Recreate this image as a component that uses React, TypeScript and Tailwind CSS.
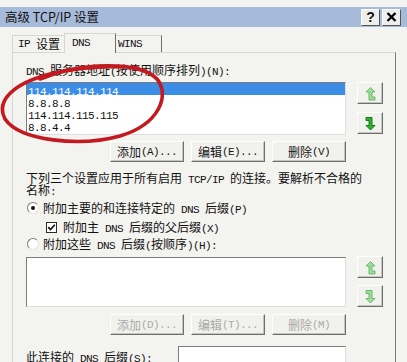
import React from "react";

function T({ s }: { s: string }) {
  const parts = s.split(/([\x20-\x7E]+)/).filter((p) => p.length > 0);
  return (
    <>
      {parts.map((p, i) =>
        /^[\x20-\x7E]+$/.test(p) ? (
          <span
            key={i}
            className="font-['Liberation_Mono',monospace] text-[11px] tracking-[-0.6px] whitespace-pre"
          >
            {p}
          </span>
        ) : (
          <span key={i} className="font-['Noto_Sans_CJK_SC',sans-serif] text-[12px]">
            {p}
          </span>
        )
      )}
    </>
  );
}

function Btn({ label, disabled }: { label: string; disabled?: boolean }) {
  return (
    <div
      className={`w-[74px] h-[21px] flex items-center justify-center leading-[12px] bg-[#f1f1ed] border border-t-white border-l-white border-r-[#6e6e6e] border-b-[#6e6e6e] shadow-[inset_-1px_-1px_0_#c4c4c0] whitespace-nowrap ${
        disabled ? "text-[#a9a9a9]" : "text-[#161616]"
      }`}
    >
      <T s={label} />
    </div>
  );
}

function Arrow({ dir, enabled }: { dir: "up" | "down"; enabled: boolean }) {
  const fill = enabled ? "#2db32d" : "#9edc9e";
  const stroke = enabled ? "#0b6e0b" : "#62b462";
  const pts =
    dir === "up"
      ? "4.5,0.5 9,5 6,5 6,10 9,10 9,13 3,13 3,5 0,5"
      : "4.5,13 0,8.5 3,8.5 3,3.5 0,3.5 0,0.5 6,0.5 6,8.5 9,8.5";
  return (
    <div className="w-[26px] h-[22px] flex items-center justify-center bg-[#f1f1ed] border border-t-white border-l-white border-r-[#6e6e6e] border-b-[#6e6e6e] shadow-[inset_-1px_-1px_0_#c4c4c0]">
      <svg width="11" height="15" viewBox="-1 -1 11 15">
        <polygon points={pts} fill={fill} stroke={stroke} strokeWidth="0.9" strokeLinejoin="round" />
      </svg>
    </div>
  );
}

function ListBox({ h, children }: { h: string; children?: React.ReactNode }) {
  return (
    <div
      className={`w-[320px] ${h} bg-white border border-t-[#7c7c7c] border-l-[#7c7c7c] border-r-[#dedede] border-b-[#dedede] overflow-hidden`}
    >
      {children}
    </div>
  );
}

export default function App() {
  const ips = ["114.114.114.114", "8.8.8.8", "114.114.115.115", "8.8.4.4"];
  return (
    <div className="relative w-[407px] h-[362px] overflow-hidden bg-[#f3f3ef] text-[#111]">
      {/* title bar */}
      <div className="mt-[7px] h-[20px] bg-[#a6bad9] flex items-center justify-between pl-[5px] pr-[6px]">
        <div className="font-['Noto_Sans_CJK_SC',sans-serif] text-[12.5px] leading-[14px] text-[#111] whitespace-nowrap">
          高级 TCP/IP 设置
        </div>
        <div className="flex gap-[2px]">
          <div className="w-[19px] h-[17px] flex items-center justify-center bg-[#eeeeec] border border-t-white border-l-white border-r-[#555] border-b-[#555] font-['Liberation_Sans',sans-serif] font-bold text-[14px] leading-[14px]">
            ?
          </div>
          <div className="w-[19px] h-[17px] flex items-center justify-center bg-[#eeeeec] border border-t-white border-l-white border-r-[#555] border-b-[#555]">
            <svg width="11" height="10" viewBox="0 0 11 10">
              <path d="M1.5 1 L9.5 9 M9.5 1 L1.5 9" stroke="#000" strokeWidth="2.3" />
            </svg>
          </div>
        </div>
      </div>

      {/* tabs */}
      <div className="relative z-10 mt-[6px] ml-[12px] h-[20px] flex items-end">
        <div className="w-[52px] h-[17px] mb-[1px] flex items-center pl-[5px] leading-[12px] border-t border-l border-t-[#d6d6d2] border-l-[#d6d6d2] whitespace-nowrap">
          <T s="IP 设置" />
        </div>
        <div className="w-[52px] h-[20px] flex items-center pl-[7px] pb-[2px] leading-[12px] bg-[#f3f3ef] border-t border-l border-r border-t-[#d6d6d2] border-l-[#d6d6d2] border-r-[#6e6e6e] whitespace-nowrap">
          <T s="DNS" />
        </div>
        <div className="w-[46px] h-[17px] mb-[1px] flex items-center pl-[2px] leading-[12px] border-t border-r border-t-[#d6d6d2] border-r-[#6e6e6e] whitespace-nowrap">
          <T s="WINS" />
        </div>
      </div>

      {/* panel */}
      <div className="relative z-0 -mt-[1px] ml-[12px] w-[384px] h-[330px] border-t border-l border-r border-t-[#d6d6d2] border-l-[#d6d6d2] border-r-[#7a7a7a] pl-[13px] pt-[10px]">
        <div className="h-[12px] leading-[12px] whitespace-nowrap">
          <T s="DNS 服务器地址(按使用顺序排列)(N):" />
        </div>

        <div className="mt-[7px] flex">
          <ListBox h="h-[53px]">
            {ips.map((ip, i) => (
              <div
                key={ip}
                className={`h-[12px] leading-[12px] pl-[1px] whitespace-nowrap ${
                  i === 0 ? "bg-[#3b8de6] text-white" : "text-[#111]"
                }`}
              >
                <T s={ip} />
              </div>
            ))}
          </ListBox>
          <div className="ml-[11px] flex flex-col gap-[8px]">
            <Arrow dir="up" enabled={false} />
            <Arrow dir="down" enabled={true} />
          </div>
        </div>

        <div className="mt-[6px] w-[320px] flex justify-end gap-[7px]">
          <Btn label="添加(A)..." />
          <Btn label="编辑(E)..." />
          <Btn label="删除(V)" />
        </div>

        <div className="mt-[9px] leading-[12px] whitespace-nowrap">
          <div className="h-[12px]">
            <T s="下列三个设置应用于所有启用 TCP/IP 的连接。要解析不合格的" />
          </div>
          <div className="h-[12px]">
            <T s="名称:" />
          </div>
        </div>

        <div className="mt-[5px] h-[16px] flex items-center whitespace-nowrap leading-[12px]">
          <div className="ml-[1px] w-[12px] h-[12px] rounded-full bg-white border border-t-[#7a7a7a] border-l-[#7a7a7a] border-r-[#e4e4e4] border-b-[#e4e4e4] flex items-center justify-center">
            <div className="w-[4px] h-[4px] rounded-full bg-[#111]" />
          </div>
          <div className="ml-[4px]">
            <T s="附加主要的和连接特定的 DNS 后缀(P)" />
          </div>
        </div>

        <div className="mt-[3px] h-[16px] flex items-center whitespace-nowrap leading-[12px] pl-[20px]">
          <div className="w-[11px] h-[11px] bg-white border border-[#2a2a2a] flex items-center justify-center">
            <svg width="9" height="9" viewBox="0 0 9 9">
              <path d="M1.2 4.2 L3.5 6.6 L7.8 1.8" fill="none" stroke="#111" strokeWidth="1.7" />
            </svg>
          </div>
          <div className="ml-[6px]">
            <T s="附加主 DNS 后缀的父后缀(X)" />
          </div>
        </div>

        <div className="mt-[1px] h-[16px] flex items-center whitespace-nowrap leading-[12px]">
          <div className="ml-[1px] w-[12px] h-[12px] rounded-full bg-white border border-t-[#7a7a7a] border-l-[#7a7a7a] border-r-[#e4e4e4] border-b-[#e4e4e4]" />
          <div className="ml-[4px]">
            <T s="附加这些 DNS 后缀(按顺序)(H):" />
          </div>
        </div>

        <div className="mt-[4px] flex">
          <div className="mt-[1px]">
            <ListBox h="h-[50px]" />
          </div>
          <div className="ml-[11px] flex flex-col gap-[7px]">
            <Arrow dir="up" enabled={false} />
            <Arrow dir="down" enabled={false} />
          </div>
        </div>

        <div className="mt-[7px] w-[320px] flex justify-end gap-[7px]">
          <Btn label="添加(D)..." disabled />
          <Btn label="编辑(T)..." disabled />
          <Btn label="删除(M)" disabled />
        </div>

        <div className="mt-[11px] flex items-start">
          <div className="w-[152px] mt-[4px] h-[12px] leading-[12px] whitespace-nowrap">
            <T s="此连接的 DNS 后缀(S):" />
          </div>
          <div className="w-[168px] h-[22px] bg-white border border-t-[#7c7c7c] border-l-[#7c7c7c] border-r-[#dedede] border-b-[#dedede]" />
        </div>
      </div>

      {/* red hand-drawn ellipse */}
      <svg className="absolute inset-0 pointer-events-none" width="407" height="362" viewBox="0 0 407 362">
        <path
          d="M 40 79 C 80 62, 140 61, 157 79 C 170 95, 160 124, 120 136 C 80 147, 20 141, 5 119 C -5 100, 15 83, 50 74 C 80 67, 110 65, 138 68"
          fill="none"
          stroke="#c21a20"
          strokeWidth="3.6"
          strokeLinecap="round"
        />
      </svg>
    </div>
  );
}
